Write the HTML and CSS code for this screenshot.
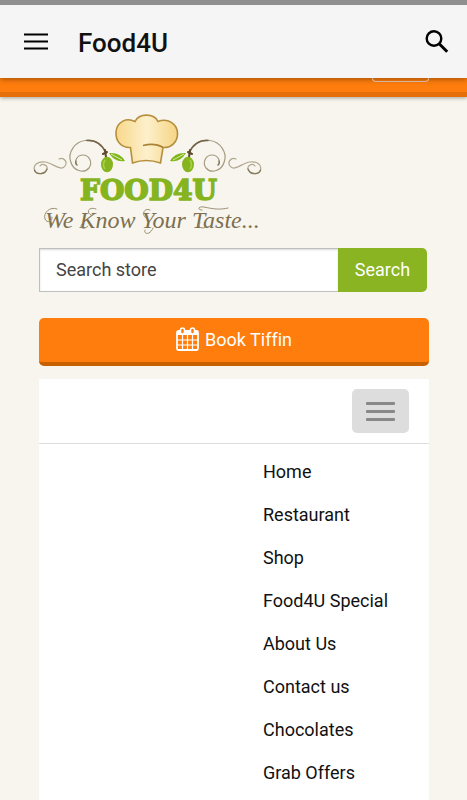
FILE: index.html
```
<!DOCTYPE html>
<html lang="en">
<head>
  <meta charset="UTF-8">
  <meta name="viewport" content="width=device-width, initial-scale=1.0">
  <title>Food4U</title>
  <link rel="stylesheet" href="styles.css">
</head>
<body>
  <header class="app-bar">
    <button class="icon-btn" type="button" aria-label="Open menu">
      <svg width="26" height="20" viewBox="0 0 26 20"><path d="M1 2.500h24M1 9.500h24M1 16.500h24" stroke="#000" stroke-width="2.2"/></svg>
    </button>
    <h1>Food4U</h1>
    <button class="icon-btn" type="button" aria-label="Search">
      <svg width="26" height="26" viewBox="0 0 26 26" fill="none" stroke="#000"><circle cx="10" cy="9.500" r="7.3" stroke-width="2.4"/><path d="M15.2 14.700l8 8" stroke-width="3"/></svg>
    </button>
  </header>

  <div class="top-strip">
    <button class="strip-btn" type="button" aria-label="Account"></button>
  </div>

  <main>
    <a class="logo" href="#" aria-label="Food4U home">
      <svg width="232" height="126" viewBox="32 112 232 126">
        <defs>
          <linearGradient id="hat">
            <stop offset="0" stop-color="#f8d88a"/>
            <stop offset="0.5" stop-color="#fdf0cc"/>
            <stop offset="1" stop-color="#f6d582"/>
          </linearGradient>
          <g id="flourish">
            <g fill="none" stroke-linecap="round">
              <path d="M106 153C102 143 93 139 85 140.500C74 142 68 153 70.500 161C73 171 84 174 89 168C93 162 89 155 83 155C77 155 74 161 77 165" stroke="#a49b80" stroke-width="1.200"/>
              <path d="M106 153C102 144 95 140 87 140.500" stroke="#75664a" stroke-width="1.600"/>
              <path d="M59 159C64 157 68 162 65 166C61 172 53 163 45 162C38 161 33 165 34.500 170C36 175 45 175 47 169C48 165 42 163 40 166" stroke="#b0a78e" stroke-width="1.200"/>
              <path d="M34.500 170C36 175 45 175 47 169M76 161Q75 164 77 165" stroke="#857a5c" stroke-width="1.300"/>
              <path d="M105 150L106 157M103 154L107 152" stroke="#5f4a2c" stroke-width="2"/>
            </g>
            <ellipse cx="107" cy="164.500" rx="6" ry="7.800" fill="#86b41f"/>
            <path d="M105 160Q102 165 105 169" fill="none" stroke="#a6d448" stroke-width="1.500"/>
            <path d="M109 153Q120 152 125 161Q115 163 109 153Z" fill="#80b51c"/>
            <path d="M111 154L122 160" stroke="#d4efa4" stroke-width="1"/>
          </g>
        </defs>
        <use href="#flourish"/>
        <use href="#flourish" transform="translate(295 0) scale(-1 1)"/>
        <path d="M132.500 163L130.500 147.500C121 148 115.500 141 116 132C117 121 127 117.500 135 121.500C139 113 154 113 158 121.500C168 117.500 177 124 177.500 133C178 142 171 148 163 147.500L160.500 163Q146 158 132.500 163Z" fill="url(#hat)" stroke="#b58e3c" stroke-width="1.600"/>
        <path d="M143 145.500Q155 142.500 163 147.500" fill="none" stroke="#a98234" stroke-width="1.600"/>
        <text class="logo-name" x="80" y="200">FOOD4U</text>
        <text class="logo-tagline" x="45" y="228">We Know Your Taste...</text>
        <!-- swashes on the tagline capitals -->
        <g fill="none" stroke="#9a9074" stroke-width="1" stroke-linecap="round">
          <path d="M57 209C50 206 43 213 45 219C47 224 53 221 52 217"/>
          <path d="M96 209C88 206 86 213 91 215M88 226C83 231 79 227 82 224"/>
          <path d="M150 210C144 207 141 215 146 218M153 228C150 236 143 234 145 230"/>
          <path d="M202 210C197 210 198 206 204 207C213 209 220 210 228 208M206 227C201 230 197 226 200 223"/>
        </g>
      </svg>
    </a>

    <form class="search">
      <input type="text" placeholder="Search store" aria-label="Search store">
      <button type="submit">Search</button>
    </form>

    <a class="book-btn" href="#">
      <svg width="23" height="24" viewBox="0 0 23 24">
        <rect x="1" y="4" width="21" height="19" rx="1.500" fill="none" stroke="#fff" stroke-width="1.800"/>
        <path d="M1 4h21v4H1z" fill="#fff"/>
        <path d="M2 13h19M2 18h19M6.500 8v14M11.500 8v14M16.500 8v14" stroke="#fff" stroke-width="1.200"/>
        <rect x="4.500" y="1" width="4" height="6" rx="2" fill="#ff7d0c" stroke="#fff" stroke-width="1.500"/>
        <rect x="14.500" y="1" width="4" height="6" rx="2" fill="#ff7d0c" stroke="#fff" stroke-width="1.500"/>
      </svg>
      <span>Book Tiffin</span>
    </a>

    <nav class="menu">
      <div class="menu-head">
        <button class="menu-toggle" type="button" aria-label="Toggle navigation">
          <span></span>
          <span></span>
          <span></span>
        </button>
      </div>
      <ul>
        <li><a href="#">Home</a></li>
        <li><a href="#">Restaurant</a></li>
        <li><a href="#">Shop</a></li>
        <li><a href="#">Food4U Special</a></li>
        <li><a href="#">About Us</a></li>
        <li><a href="#">Contact us</a></li>
        <li><a href="#">Chocolates</a></li>
        <li><a href="#">Grab Offers</a></li>
      </ul>
    </nav>
  </main>
</body>
</html>
```
FILE: styles.css
```
* { box-sizing: border-box; }
body { margin: 0; min-height: 100vh; display: flex; flex-direction: column; background: #f8f5ee; color: #111; font-family: Roboto, sans-serif; font-size: 18px; }
button, input { font: inherit; }
button { border: 0; padding: 0; cursor: pointer; }
a { color: inherit; text-decoration: none; }
svg { display: block; }

/* app bar */
.app-bar { position: relative; z-index: 1; display: flex; align-items: center; height: 78px; padding: 0 17px 0 23px; border-top: 5px solid #8f8f8f; background: #f5f5f5; box-shadow: 0 1px 6px rgba(0,0,0,0.4); }
.app-bar h1 { flex: 1; margin: 2px 0 0 29px; font-size: 26px; font-weight: 500; line-height: 32px; }
.icon-btn { background: none; }

.top-strip { display: flex; justify-content: flex-end; align-items: flex-start; height: 19px; padding-right: 38px; background: #ff7d0c; border-bottom: 5px solid #e5700a; box-shadow: 0 1px 4px rgba(0,0,0,0.35); }
.strip-btn { position: relative; z-index: 2; width: 57px; height: 4px; background: none; border: 1px solid #d3b7a3; border-top: 0; border-radius: 0 0 4px 4px; }

main { flex: 1; display: flex; flex-direction: column; padding: 15px 38px 0 39px; }

/* logo */
.logo { align-self: flex-start; margin: 0 0 10px -7px; }
.logo-name { font-family: "DejaVu Serif", serif; font-size: 28px; font-weight: bold; fill: #86b41f; stroke: #86b41f; stroke-width: 1.6px; }
.logo-tagline { font-family: "Liberation Serif", serif; font-size: 24px; font-style: italic; fill: #7c704f; }

/* search */
.search { display: flex; height: 44px; margin: 0 2px 26px 0; }
.search input { flex: 1; min-width: 0; padding: 0 16px 2px; border: 1px solid #bfbfbf; border-right: 0; border-radius: 0; background: #fff; box-shadow: inset 0 1px 2px rgba(0,0,0,0.15); color: #444; outline: 0; }
.search input::placeholder { color: #444; opacity: 1; }
.search button { width: 89px; padding-bottom: 2px; border-radius: 0 5px 5px 0; background: #8ab421; color: #fff; }

.book-btn { display: flex; justify-content: center; align-items: center; gap: 6px; height: 48px; margin-bottom: 13px; padding-bottom: 2px; border-bottom: 4px solid #c86000; border-radius: 5px; background: #ff7d0c; color: #fff; font-variant-ligatures: none; }

/* menu */
.menu { flex: 1; background: #fff; }
.menu-head { display: flex; justify-content: flex-end; padding: 10px 20px; border-bottom: 1px solid #ddd; }
.menu-toggle { display: flex; flex-direction: column; justify-content: center; align-items: center; gap: 5px; width: 57px; height: 44px; border-radius: 5px; background: #ddd; }
.menu-toggle span { width: 29px; height: 3px; border-radius: 1px; background: #888; }
.menu ul { width: 166px; margin: 0 0 0 auto; padding: 6px 0 0; list-style: none; }
.menu li a { display: block; line-height: 43px; }
```
